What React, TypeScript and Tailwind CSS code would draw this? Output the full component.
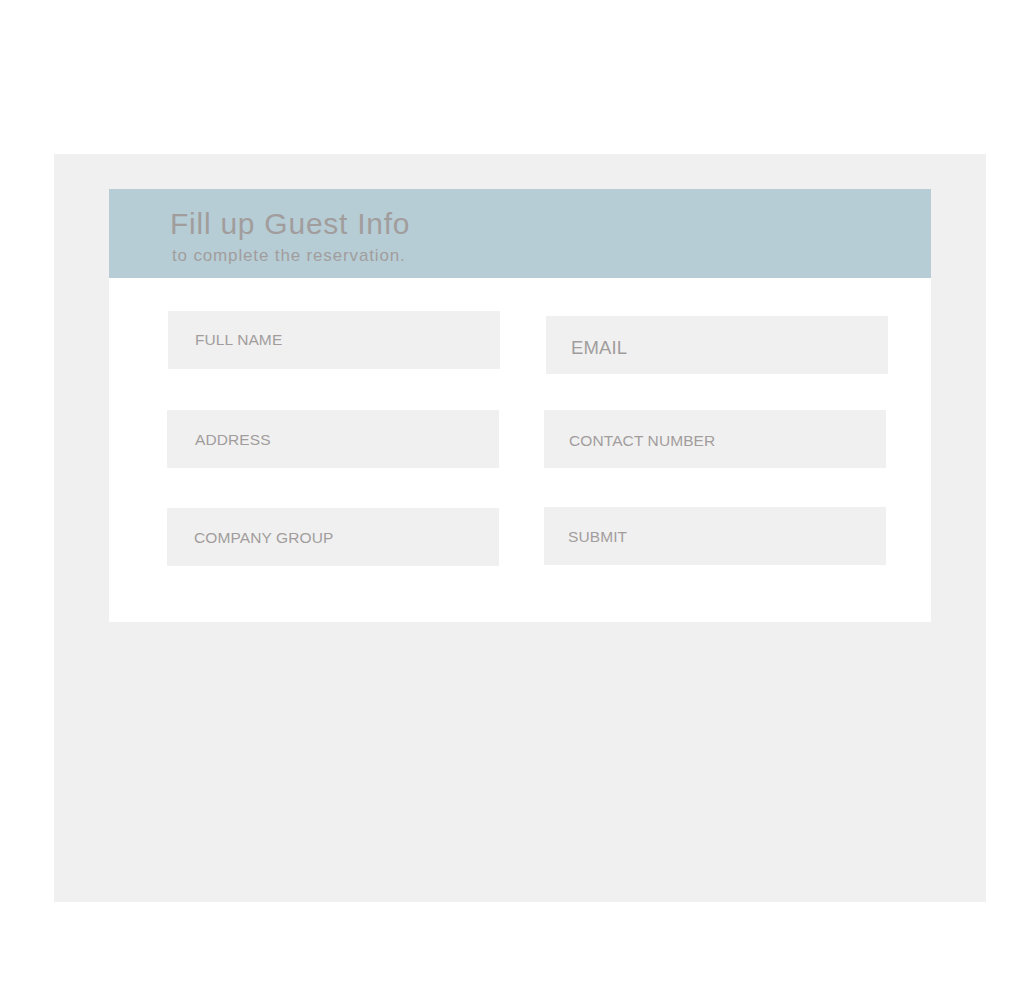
import React from 'react';

const font = { fontFamily: '"Liberation Sans", Arial, sans-serif' };

export default function App() {
  return (
    <div className="min-h-screen bg-white pt-[154px]" style={font}>
      <div className="ml-[54px] w-[932px] h-[748px] bg-[#f0f0f0] pt-[35px] pl-[55px]">
        <div className="w-[822px] h-[433px] bg-white">
          {/* Header */}
          <div className="h-[89px] bg-[#b6cdd5] pl-[61px] pt-[20px] text-[#a29d9d]">
            <h1 className="text-[30px] leading-none tracking-[0.75px]">Fill up Guest Info</h1>
            <p className="ml-[2px] mt-[8px] text-[17px] leading-none tracking-[0.85px]">
              to complete the reservation.
            </p>
          </div>

          {/* Form */}
          <div className="pl-[58px] pt-[33px] text-[#a29d9d] tracking-[0.1px]">
            <div className="flex">
              <div className="ml-[1px] w-[332px] h-[58px] bg-[#f0f0f0] flex items-center pl-[27px] text-[15.5px]">
                FULL NAME
              </div>
              <div className="ml-[46px] mt-[5px] w-[342px] h-[58px] bg-[#f0f0f0] flex items-center pl-[25px] pt-[5px] text-[18.5px]">
                EMAIL
              </div>
            </div>
            <div className="flex mt-[36px]">
              <div className="w-[332px] h-[58px] bg-[#f0f0f0] flex items-center pl-[28px] pt-[2px] text-[15.5px]">
                ADDRESS
              </div>
              <div className="ml-[45px] w-[342px] h-[58px] bg-[#f0f0f0] flex items-center pl-[25px] pt-[3px] text-[15.5px]">
                CONTACT NUMBER
              </div>
            </div>
            <div className="flex mt-[40px]">
              <div className="w-[332px] h-[58px] bg-[#f0f0f0] flex items-center pl-[27px] pt-[2px] text-[15.5px]">
                COMPANY GROUP
              </div>
              <div className="ml-[45px] -mt-[1px] w-[342px] h-[58px] bg-[#f0f0f0] flex items-center pl-[24px] pt-[2px] text-[15.5px]">
                SUBMIT
              </div>
            </div>
          </div>
        </div>
      </div>
    </div>
  );
}
